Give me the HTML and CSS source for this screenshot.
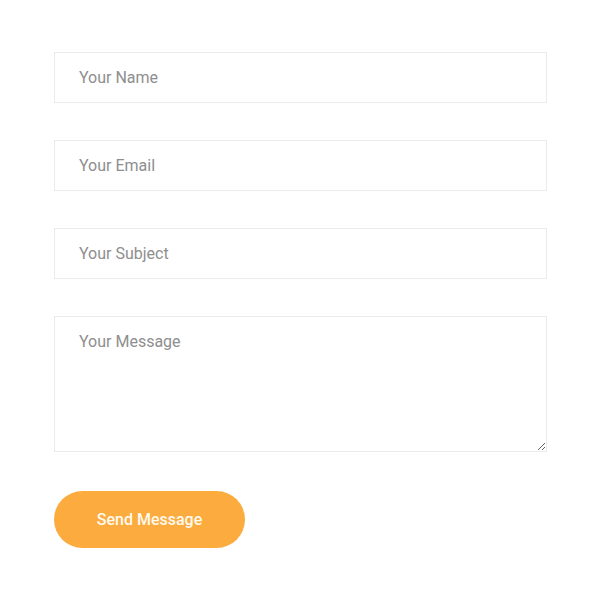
FILE: index.html
```html
<!DOCTYPE html>
<html>
<head>
<meta charset="utf-8">
<link rel="stylesheet" href="styles.css">
</head>
<body>
<form class="contact">
  <input class="field" type="text" placeholder="Your Name">
  <input class="field" type="email" placeholder="Your Email">
  <input class="field" type="text" placeholder="Your Subject">
  <textarea class="field area" placeholder="Your Message"></textarea>
  <button class="send" type="button">Send Message</button>
</form>
</body>
</html>
```
FILE: styles.css
```css
html, body {
  margin: 0;
  background: #fff;
}
body {
  font-family: Roboto, "Liberation Sans", sans-serif;
}
.contact {
  display: flex;
  flex-direction: column;
  align-items: flex-start;
  padding: 52px 0 0 54px;
  width: 493px;
}
.field {
  box-sizing: border-box;
  width: 493px;
  height: 51px;
  margin: 0 0 37px 0;
  padding: 0 24px;
  border: 1px solid #ebebeb;
  border-radius: 0;
  font-family: Roboto, "Liberation Sans", sans-serif;
  font-size: 16px;
  color: #555;
  background: #fff;
  outline: none;
}
.field::placeholder {
  color: #8e8e8e;
  opacity: 1;
}
.area {
  height: 136px;
  padding: 15px 24px;
  margin-bottom: 39px;
  resize: vertical;
  display: block;
}
.send {
  width: 191px;
  height: 57px;
  border: none;
  border-radius: 29px;
  background: #fcab3e;
  color: #fffaf0;
  font-family: Roboto, "Liberation Sans", sans-serif;
  font-size: 16px;
  font-weight: 500;
  cursor: pointer;
}
```
